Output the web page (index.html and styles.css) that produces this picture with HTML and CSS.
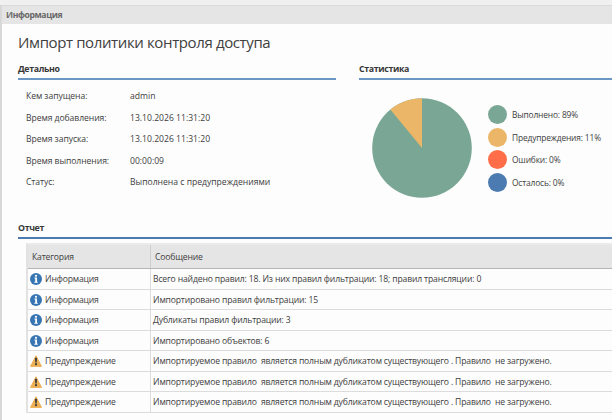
FILE: index.html
```html
<!DOCTYPE html>
<html lang="ru">
<head>
  <meta charset="UTF-8" />
  <meta name="viewport" content="width=device-width, initial-scale=1.0"/>
  <title>Импорт политики контроля доступа</title>
  <link rel="stylesheet" href="styles.css">
</head>
<body>
  <svg class="sprite" width="0" height="0">
    <symbol id="info" viewBox="0 0 12 12">
      <circle cx="6" cy="6" r="6" fill="#3775b3"/>
      <circle cx="6" cy="2.8" r="1.1" fill="#fff"/>
      <path d="M4.4 4.6h2.6v4.1h.8v1H4.3v-1h.9V5.6h-.8z" fill="#fff"/>
    </symbol>
    <symbol id="warn" viewBox="0 0 12 12">
      <path d="M6 .8 11.5 11.4H.5z" fill="#edb055" stroke="#edb055" stroke-width="1" stroke-linejoin="round"/>
      <path d="M4.9 2.8h2.2L6.7 7.6H5.3z" fill="#3c3c3c"/>
      <circle cx="6" cy="9.2" r="1.1" fill="#3c3c3c"/>
    </symbol>
  </svg>
  <div class="panel">
    <div class="panel-header">Информация</div>
    <div class="content">
      <h1>Импорт политики контроля доступа</h1>
      <div class="columns">
        <div class="details">
          <h2>Детально</h2>
          <dl>
            <dt>Кем запущена:</dt><dd>admin</dd>
            <dt>Время добавления:</dt><dd>13.10.2026 11:31:20</dd>
            <dt>Время запуска:</dt><dd>13.10.2026 11:31:20</dd>
            <dt>Время выполнения:</dt><dd>00:00:09</dd>
            <dt>Статус:</dt><dd>Выполнена с предупреждениями</dd>
          </dl>
        </div>
        <div class="stats">
          <h2>Статистика</h2>
          <div class="chart">
            <svg class="pie" width="100" height="100" viewBox="0 0 100 100">
              <circle cx="50" cy="50" r="49.8" fill="#7aa695"/>
              <path d="M50 50V.2A49.8 49.8 0 0 0 18.3 11.6z" fill="#ebb668"/>
            </svg>
            <ul class="legend">
              <li><i class="dot done"></i>Выполнено: 89%</li>
              <li><i class="dot warning"></i>Предупреждения: 11%</li>
              <li><i class="dot error"></i>Ошибки: 0%</li>
              <li><i class="dot left"></i>Осталось: 0%</li>
            </ul>
          </div>
        </div>
      </div>
      <div class="report">
        <h2>Отчет</h2>
        <div class="table">
          <div class="row head"><div class="cell">Категория</div><div class="cell">Сообщение</div></div>
          <div class="row"><div class="cell"><svg><use href="#info"/></svg>Информация</div><div class="cell">Всего найдено правил: 18. Из них правил фильтрации: 18; правил трансляции: 0</div></div>
          <div class="row"><div class="cell"><svg><use href="#info"/></svg>Информация</div><div class="cell">Импортировано правил фильтрации: 15</div></div>
          <div class="row"><div class="cell"><svg><use href="#info"/></svg>Информация</div><div class="cell">Дубликаты правил фильтрации: 3</div></div>
          <div class="row"><div class="cell"><svg><use href="#info"/></svg>Информация</div><div class="cell">Импортировано объектов: 6</div></div>
          <div class="row"><div class="cell"><svg><use href="#warn"/></svg>Предупреждение</div><div class="cell">Импортируемое правило  является полным дубликатом существующего . Правило  не загружено.</div></div>
          <div class="row"><div class="cell"><svg><use href="#warn"/></svg>Предупреждение</div><div class="cell">Импортируемое правило  является полным дубликатом существующего . Правило  не загружено.</div></div>
          <div class="row"><div class="cell"><svg><use href="#warn"/></svg>Предупреждение</div><div class="cell">Импортируемое правило  является полным дубликатом существующего . Правило  не загружено.</div></div>
        </div>
      </div>
    </div>
  </div>
</body>
</html>
```
FILE: styles.css
```css
* {
  box-sizing: border-box;
}
body {
  margin: 0;
  padding-top: 5px;
  height: 420px;
  overflow: hidden;
  background: #f0f0f0;
  color: #404040;
  font-family: "Open Sans", "Noto Sans", sans-serif;
  font-size: 8.6px;
}
.sprite {
  position: absolute;
}
.panel {
  height: 415px;
  border-left: 2px solid #d8d8d8;
  background: #fdfdfd;
}
.panel-header {
  height: 19px;
  padding-left: 4px;
  border-top: 1px solid #dadada;
  background: #e5e5e5;
  color: #686868;
  font-weight: bold;
  letter-spacing: -0.4px;
  line-height: 19px;
}
.content {
  padding: 8px 0 0 16px;
}
h1 {
  margin: 0;
  height: 22px;
  font-size: 15px;
  font-weight: normal;
  letter-spacing: -0.38px;
  line-height: 21px;
  white-space: nowrap;
}
h2 {
  margin: 0;
  height: 26px;
  padding-top: 7px;
  border-bottom: 2px solid #6b97c4;
  color: #383838;
  font-size: 8.8px;
  letter-spacing: -0.35px;
  line-height: 17px;
}
.columns {
  display: grid;
  grid-template-columns: 318px 1fr;
  column-gap: 23px;
  height: 159px;
}
dl {
  display: grid;
  grid-template-columns: 104px 1fr;
  grid-auto-rows: 21.6px;
  margin: 6px 0 0;
  padding-left: 8px;
  line-height: 21.6px;
}
dt {
  letter-spacing: -0.06px;
}
dd {
  margin: 0;
}
.chart {
  display: flex;
  padding: 18px 0 0 13px;
}
.legend {
  margin: 5px 0 0 16px;
  padding: 0;
  list-style: none;
  font-size: 8.4px;
  letter-spacing: -0.15px;
}
.legend li {
  display: flex;
  align-items: center;
  height: 22.8px;
  white-space: nowrap;
}
.dot {
  width: 19px;
  height: 19px;
  margin-right: 5px;
  border-radius: 50%;
}
.done { background: #7aa695; }
.warning { background: #ebb668; }
.error { background: #ff6e48; }
.left { background: #4b7bb0; }
.report h2 {
  border-bottom-color: #4b7bb0;
}
.table {
  margin: 4px 0 0 8px;
  border-top: 2px solid #eaeaea;
  border-left: 2px solid #e2e2e2;
  letter-spacing: -0.15px;
}
.row {
  display: grid;
  grid-template-columns: 122px 1fr;
  height: 20.5px;
  border-bottom: 1px solid #dcdcdc;
}
.cell {
  display: flex;
  align-items: center;
  padding: 1px 0 0 2px;
  white-space: pre;
}
.cell + .cell {
  border-left: 1px solid #dcdcdc;
}
.cell svg {
  width: 12px;
  height: 12px;
  margin-right: 3px;
}
.head {
  height: 24px;
  border-bottom: 1px solid #b5b5b5;
  background: #e5e5e5;
}
.head .cell {
  padding-left: 4px;
}
.head .cell + .cell {
  border-left-color: #d0d0d0;
}
```
